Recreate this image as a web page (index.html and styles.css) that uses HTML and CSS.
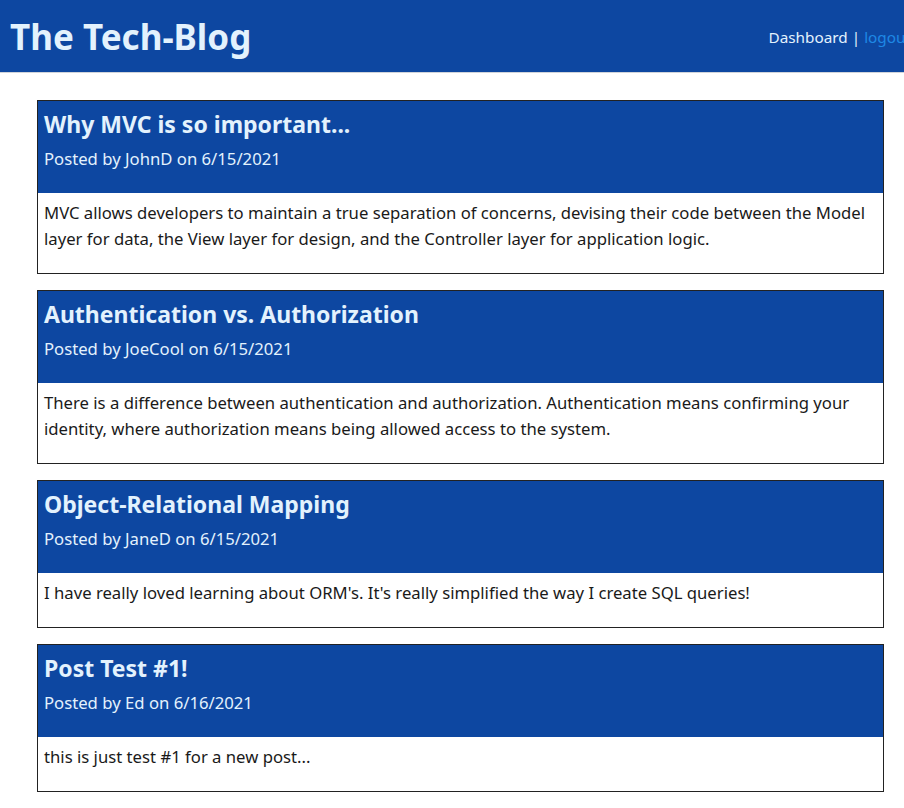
FILE: index.html
```html
<!DOCTYPE html>
<html lang="en">
<head>
<meta charset="utf-8">
<title>The Tech-Blog</title>
<link rel="stylesheet" href="styles.css">
</head>
<body>
<header class="site-header">
  <h1 class="brand">The Tech-Blog</h1>
  <nav class="nav">
    <a class="nav-link" href="#">Dashboard</a> <span class="sep">|</span> <a class="nav-link logout" href="#">logout</a>
  </nav>
</header>
<main class="posts">
  <article class="post">
    <div class="post-head">
      <h2 class="post-title">Why MVC is so important...</h2>
      <p class="post-meta">Posted by JohnD on 6/15/2021</p>
    </div>
    <div class="post-body">
      <p>MVC allows developers to maintain a true separation of concerns, devising their code between the Model layer for data, the View layer for design, and the Controller layer for application logic.</p>
    </div>
  </article>
  <article class="post">
    <div class="post-head">
      <h2 class="post-title">Authentication vs. Authorization</h2>
      <p class="post-meta">Posted by JoeCool on 6/15/2021</p>
    </div>
    <div class="post-body">
      <p>There is a difference between authentication and authorization. Authentication means confirming your identity, where authorization means being allowed access to the system.</p>
    </div>
  </article>
  <article class="post">
    <div class="post-head">
      <h2 class="post-title">Object-Relational Mapping</h2>
      <p class="post-meta">Posted by JaneD on 6/15/2021</p>
    </div>
    <div class="post-body">
      <p>I have really loved learning about ORM's. It's really simplified the way I create SQL queries!</p>
    </div>
  </article>
  <article class="post">
    <div class="post-head">
      <h2 class="post-title">Post Test #1!</h2>
      <p class="post-meta">Posted by Ed on 6/16/2021</p>
    </div>
    <div class="post-body">
      <p>this is just test #1 for a new post...</p>
    </div>
  </article>
</main>
</body>
</html>
```
FILE: styles.css
```css
html, body {
  margin: 0;
  padding: 0;
  overflow-x: hidden;
}
body {
  font-family: "Noto Sans", "Open Sans", sans-serif;
  font-size: 16.7px;
  color: #1a1a1a;
  background: #fff;
}
.site-header {
  display: flex;
  justify-content: space-between;
  align-items: center;
  height: 72px;
  background: #0d47a1;
  border-bottom: 1px solid #d0d4da;
  padding: 0 0 0 10px;
  margin-right: -7px;
}
.brand {
  margin: 0;
  font-size: 35px;
  font-weight: 700;
  color: #e3f2fd;
}
.nav {
  font-size: 15.3px;
  color: #e3f2fd;
  white-space: nowrap;
  padding-top: 2px;
}
.nav-link {
  color: #e3f2fd;
  text-decoration: none;
}
.nav-link.logout {
  color: #1e88e5;
}
.posts {
  display: flex;
  flex-direction: column;
  gap: 16px;
  padding: 27px 20px 20px 37px;
}
.post {
  border: 1px solid #222;
}
.post-head {
  background: #0d47a1;
  color: #e3f2fd;
  padding: 6px 6px 21px;
}
.post-title {
  margin: 0;
  font-size: 23px;
  line-height: 35px;
  font-weight: 700;
}
.post-meta {
  margin: 3px 0 0;
  line-height: 27px;
}
.post-body {
  padding: 7px 6px 21px;
  line-height: 26px;
}
.post-body p {
  margin: 0;
}
```
